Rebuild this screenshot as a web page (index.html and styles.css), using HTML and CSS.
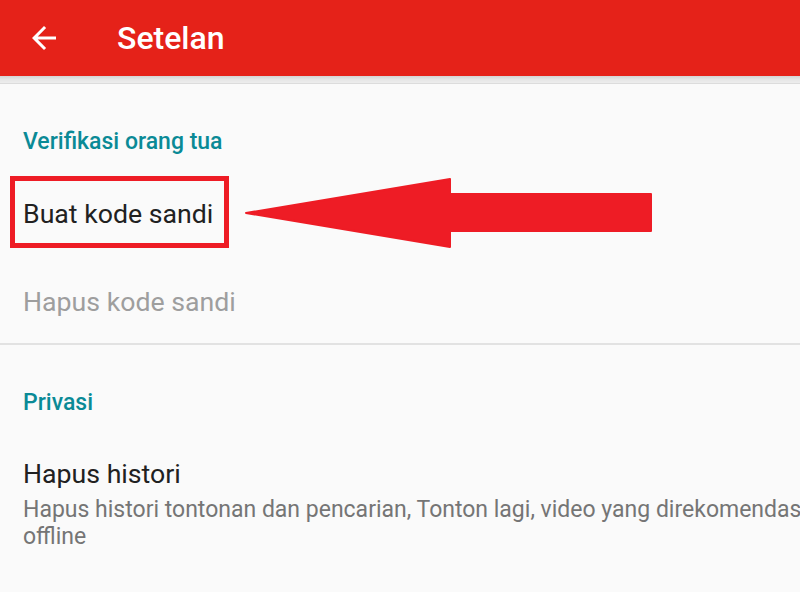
FILE: index.html
```html
<!DOCTYPE html>
<html lang="id">
<head>
<meta charset="utf-8">
<title>Setelan</title>
<link rel="stylesheet" href="styles.css">
</head>
<body>
<div class="page">
  <header class="appbar">
    <svg class="back" viewBox="0 0 24 24" width="36" height="36"><path fill="#fff" d="M20 11H7.83l5.59-5.59L12 4l-8 8 8 8 1.41-1.41L7.83 13H20v-2z"/></svg>
    <h1 class="title">Setelan</h1>
  </header>
  <div class="shadow"></div>
  <main class="content">
    <section class="group">
      <h2 class="cat">Verifikasi orang tua</h2>
      <div class="hl"><span class="item">Buat kode sandi</span></div>
      <div class="item disabled">Hapus kode sandi</div>
    </section>
    <hr class="divider">
    <section class="group">
      <h2 class="cat">Privasi</h2>
      <div class="item-title">Hapus histori</div>
      <div class="summary">
        <span class="line">Hapus histori tontonan dan pencarian, Tonton lagi, video yang direkomendasikan, dan video</span>
        <span class="line">offline</span>
      </div>
    </section>
  </main>
  <svg class="pointer" width="800" height="592" viewBox="0 0 800 592">
    <path fill="#ee1c25" stroke="#ee1c25" stroke-width="2" stroke-linejoin="round" d="M246 213 L450 179 L450 194 L651 194 L651 231 L450 231 L450 247 Z"/>
  </svg>
</div>
</body>
</html>
```
FILE: styles.css
```css
html, body {
  margin: 0;
  padding: 0;
  background: #fafafa;
  overflow: hidden;
}
.page {
  position: relative;
  width: 800px;
  height: 592px;
  overflow: hidden;
  font-family: Roboto, "Noto Sans", sans-serif;
}
.appbar {
  display: flex;
  align-items: center;
  height: 76px;
  background: #e52219;
  padding-left: 26px;
}
.back {
  display: block;
  flex: none;
}
.title {
  margin: 0 0 0 55px;
  font-size: 32px;
  font-weight: 500;
  color: #fff;
  line-height: 76px;
}
.shadow {
  height: 8px;
  background: linear-gradient(#d4d4d4, #e6e6e6 50%, #ededed);
  border-bottom: 1px solid #dcdcdc;
  box-sizing: border-box;
}
.content {
  display: block;
}
.group {
  display: flex;
  flex-direction: column;
  align-items: flex-start;
}
.cat {
  margin: 46px 0 0 23px;
  font-size: 23px;
  line-height: 24px;
  font-weight: 500;
  color: #0a8a96;
}
.hl {
  margin: 22px 0 0 10px;
  border: 5px solid #ee1c25;
  padding: 4px 11px 0 8px;
  height: 58px;
  box-sizing: content-box;
}
.hl .item {
  display: block;
  font-size: 26.7px;
  line-height: 58px;
  color: #212121;
}
.item {
  font-size: 26.7px;
  line-height: 60px;
  color: #212121;
}
.item.disabled {
  margin: 24px 0 0 23px;
  color: #9e9e9e;
}
.divider {
  margin: 11px 0 0 0;
  border: 0;
  height: 2px;
  background: #e2e2e2;
  width: 100%;
}
.item-title {
  margin: 43px 0 0 23px;
  font-size: 26.7px;
  line-height: 32px;
  color: #212121;
}
.summary {
  margin: 6px 0 0 23px;
  font-size: 23px;
  line-height: 27px;
  color: #757575;
  display: flex;
  flex-direction: column;
}
.line {
  white-space: nowrap;
}
.pointer {
  position: absolute;
  left: 0;
  top: 0;
  pointer-events: none;
}
```
